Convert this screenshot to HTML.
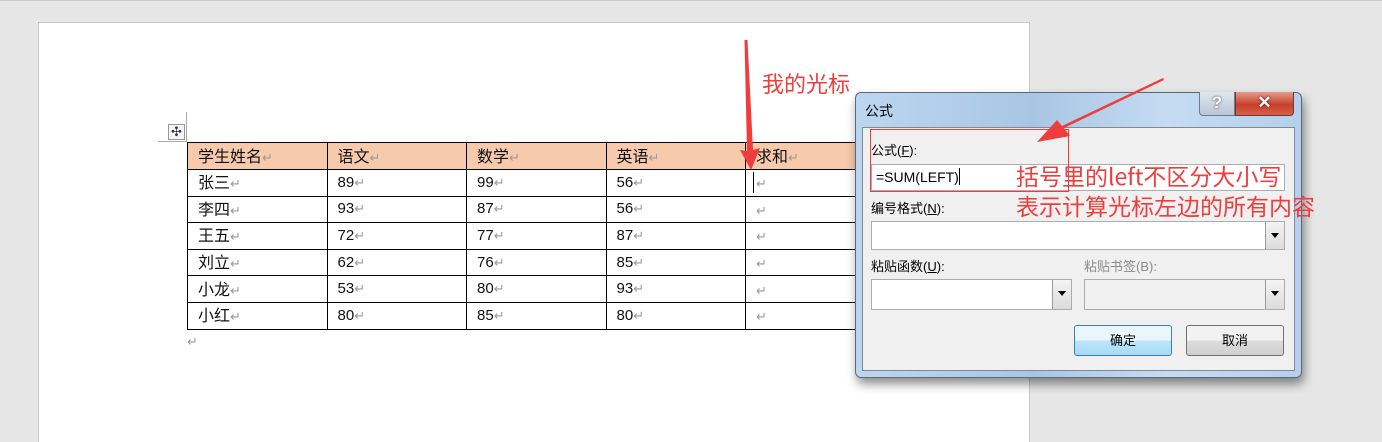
<!DOCTYPE html>
<html><head><meta charset="utf-8"><style>
*{margin:0;padding:0;box-sizing:border-box}
body{width:1382px;height:422px;background:#e6e6e6;position:relative;overflow:hidden;font-family:"Liberation Sans","Noto Sans CJK SC",sans-serif}
.topline{position:absolute;left:0;top:0;width:1382px;height:1px;background:#ccc}
.page{position:absolute;left:38px;top:22px;width:992px;height:420px;background:#fff;border-left:1px solid #c8c8c8;border-top:1px solid #c8c8c8;border-right:1px solid #c8c8c8}
table{position:absolute;left:187px;top:142px;border-collapse:collapse;font-size:16px}
td{border:1px solid #000;width:139.5px;height:26.6px;padding:0 0 0 10px;font-family:"Noto Sans CJK SC",sans-serif;color:#111;white-space:nowrap;line-height:20px}
td.n{font-family:"Liberation Sans",sans-serif;font-size:15px}
tr.h td{background:#f7caac;height:27px}
.r{color:#9a9a9a;font-size:13px;font-family:"Liberation Sans","DejaVu Sans",sans-serif}
.mover{position:absolute;left:168px;top:124px;width:17px;height:16px;border:1px solid #999;background:#f4f4f4;font-size:13px;line-height:13px;text-align:center;color:#333}
.dlg{position:absolute;left:855px;top:92px;width:447px;height:286px;background:linear-gradient(90deg,#bcd6ef,#a8c6e4 40%,#c5dcf2 70%,#b5d0ec);border:1px solid #5a6a7e;border-radius:6px;box-shadow:2px 6px 10px rgba(0,0,0,.45)}
.inner{position:absolute;left:6px;top:34px;width:433px;height:244px;background:#f0f0f0;border:1px solid #7f8a96}
.lbl{position:absolute;font-size:13px;color:#000;font-family:"Liberation Sans","Noto Sans CJK SC",sans-serif}
.box{position:absolute;background:#fff;border:1px solid #abadb3}
.dd{position:absolute;right:0;top:0;width:19px;height:100%;background:linear-gradient(#f4f4f4,#dcdcdc);border-left:1px solid #9a9a9a}
.dd:after{content:"";position:absolute;left:5px;top:11px;border-left:4px solid transparent;border-right:4px solid transparent;border-top:5px solid #000}
.btn{position:absolute;width:98px;height:31px;border:1px solid #707070;border-radius:3px;background:linear-gradient(#f2f2f2 50%,#dddddd 50%,#cfcfcf);font-size:13px;text-align:center;line-height:29px}
.red{color:#f03c3c;font-family:"Noto Sans CJK SC",sans-serif;position:absolute;white-space:nowrap}
</style></head><body>
<div class="topline"></div>
<div class="page"></div>
<div style="position:absolute;left:186px;top:112px;width:1px;height:30px;background:#aaa"></div>
<div style="position:absolute;left:158px;top:141px;width:29px;height:1px;background:#aaa"></div>
<div class="mover">✣</div>
<table>
<tr class="h"><td>学生姓名<span class="r">↵</span></td><td>语文<span class="r">↵</span></td><td>数学<span class="r">↵</span></td><td>英语<span class="r">↵</span></td><td>求和<span class="r">↵</span></td></tr>
<tr><td>张三<span class="r">↵</span></td><td class="n">89<span class="r">↵</span></td><td class="n">99<span class="r">↵</span></td><td class="n">56<span class="r">↵</span></td><td><span class="r">↵</span></td></tr>
<tr><td>李四<span class="r">↵</span></td><td class="n">93<span class="r">↵</span></td><td class="n">87<span class="r">↵</span></td><td class="n">56<span class="r">↵</span></td><td><span class="r">↵</span></td></tr>
<tr><td>王五<span class="r">↵</span></td><td class="n">72<span class="r">↵</span></td><td class="n">77<span class="r">↵</span></td><td class="n">87<span class="r">↵</span></td><td><span class="r">↵</span></td></tr>
<tr><td>刘立<span class="r">↵</span></td><td class="n">62<span class="r">↵</span></td><td class="n">76<span class="r">↵</span></td><td class="n">85<span class="r">↵</span></td><td><span class="r">↵</span></td></tr>
<tr><td>小龙<span class="r">↵</span></td><td class="n">53<span class="r">↵</span></td><td class="n">80<span class="r">↵</span></td><td class="n">93<span class="r">↵</span></td><td><span class="r">↵</span></td></tr>
<tr><td>小红<span class="r">↵</span></td><td class="n">80<span class="r">↵</span></td><td class="n">85<span class="r">↵</span></td><td class="n">80<span class="r">↵</span></td><td><span class="r">↵</span></td></tr>
</table>
<div class="r" style="position:absolute;left:187px;top:334px">↵</div>
<div style="position:absolute;left:753px;top:172px;width:1px;height:21px;background:#000"></div>
<div class="red" style="left:762px;top:67px;font-size:22px">我的光标</div>
<div class="dlg">
 <div style="position:absolute;left:9px;top:8px;font-size:14px;font-family:'Noto Sans CJK SC',sans-serif">公式</div>
 <div style="position:absolute;left:343px;top:-1px;width:36px;height:24px;border:1px solid #6d7b8c;border-top:none;border-radius:0 0 0 4px;background:linear-gradient(#dfe6ee,#b9c6d4);text-align:center;font-weight:bold;color:#fff;font-size:17px;line-height:22px;text-shadow:0 0 2px #333">?</div>
 <div style="position:absolute;left:379px;top:-1px;width:59px;height:24px;border:1px solid #6d3a32;border-top:none;border-radius:0 0 4px 0;background:linear-gradient(#e29c8c,#c8402a 55%,#d8604a);text-align:center;font-weight:bold;color:#fff;font-size:17px;line-height:22px;text-shadow:0 0 2px #400">✕</div>
 <div class="inner">
  <div class="lbl" style="left:8px;top:12px">公式(<u>F</u>):</div>
  <div class="box" style="left:8px;top:36px;width:414px;height:27px;font-size:14px;line-height:24px;padding-left:4px">=SUM(LEFT)<span style="display:inline-block;width:1px;height:17px;background:#000;vertical-align:-3px"></span></div>
  <div class="lbl" style="left:8px;top:70px">编号格式(<u>N</u>):</div>
  <div class="box" style="left:8px;top:93px;width:414px;height:29px"><div class="dd"></div></div>
  <div class="lbl" style="left:8px;top:128px">粘贴函数(<u>U</u>):</div>
  <div class="box" style="left:8px;top:151px;width:201px;height:31px"><div class="dd"></div></div>
  <div class="lbl" style="left:221px;top:128px;color:#8a8a8a">粘贴书签(B):</div>
  <div class="box" style="left:221px;top:151px;width:201px;height:31px;background:#f0f0f0"><div class="dd"></div></div>
  <div class="btn" style="left:211px;top:197px;border-color:#3c7fb1;background:linear-gradient(#eaf6fd 50%,#bee6fd 50%,#a7d9f5)">确定</div>
  <div class="btn" style="left:323px;top:197px">取消</div>
 </div>
</div>
<div style="position:absolute;left:870px;top:129px;width:199px;height:63px;border:1px solid #f03c3c"></div>
<div class="red" style="left:1016px;top:158px;font-size:23px">括号里的left不区分大小写</div>
<div class="red" style="left:1016px;top:188px;font-size:23px">表示计算光标左边的所有内容</div>
<svg style="position:absolute;left:0;top:0" width="1382" height="422">
 <polygon points="744.5,40 747.5,40 753,150 760,148 751,170 740,150 747,151" fill="#f03c3c"/>
 <polygon points="1163,78 1164,80 1064,128 1070,136 1037,142 1057,120 1062,126" fill="#f03c3c"/>
</svg>
</body></html>
